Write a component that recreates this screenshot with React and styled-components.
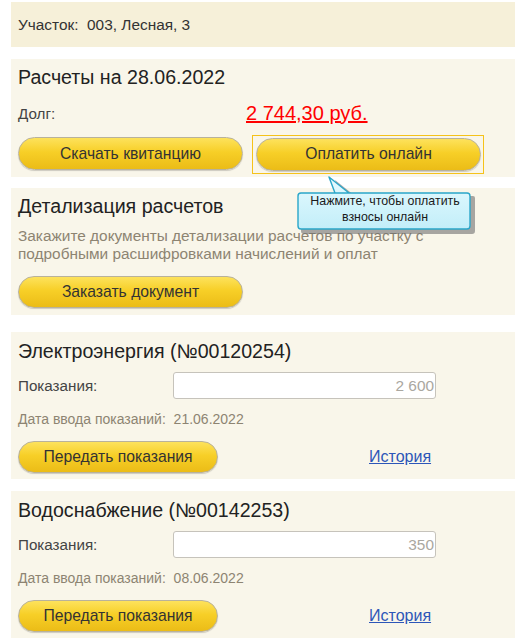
import React from "react";
import styled, { createGlobalStyle } from "styled-components";

const GlobalStyle = createGlobalStyle`
  html, body {
    margin: 0;
    padding: 0;
    background: #ffffff;
  }
  body {
    font-family: "Liberation Sans", Arial, sans-serif;
    color: #333;
  }
`;

const Page = styled.div`
  display: flex;
  flex-direction: column;
  padding: 2px 0 0 11px;
  width: 504px;
`;

const Panel = styled.section`
  position: relative;
  background: ${(p) => (p.$tone === "dark" ? "#f6f0d9" : "#f9f6ea")};
  padding: ${(p) => p.$pad || "6px 0 7px 7px"};
  margin-top: ${(p) => p.$gap || 0}px;
  display: flex;
  flex-direction: column;
`;

const Address = styled.div`
  font-size: 15.4px;
  line-height: 45px;
  height: 45px;
  padding-left: 7px;
  color: #333;
`;

const Title = styled.h2`
  margin: 0;
  font-weight: normal;
  font-size: 19.6px;
  line-height: 24px;
  color: #222;
`;

const Row = styled.div`
  display: grid;
  grid-template-columns: ${(p) => p.$cols};
  align-items: center;
  margin-top: ${(p) => p.$top}px;
`;

const Label = styled.span`
  font-size: 15.2px;
  color: #444;
`;

const Debt = styled.a`
  font-size: 20px;
  line-height: 24px;
  color: #ff0000;
  text-decoration: underline;
  justify-self: start;
`;

const Description = styled.p`
  margin: 9px 0 0;
  font-size: 15.4px;
  line-height: 18px;
  color: #8d8472;
  width: 430px;
`;

const Note = styled.div`
  margin-top: ${(p) => p.$top}px;
  font-size: 14px;
  line-height: 16px;
  color: #8d8472;
`;

const Button = styled.button`
  width: ${(p) => p.$w}px;
  height: ${(p) => p.$h || 32}px;
  border-radius: 17px;
  border: 1px solid #b9b29b;
  background: linear-gradient(to bottom, #fde25c 0%, #f7cf27 45%, #ebbc17 100%);
  box-shadow: 0 1px 1px rgba(0, 0, 0, 0.18);
  font-family: "Liberation Sans", Arial, sans-serif;
  font-size: 15.7px;
  color: #333;
  padding: 0;
  cursor: pointer;
`;

const Actions = styled.div`
  display: flex;
  align-items: center;
  gap: 14px;
  margin-top: ${(p) => p.$top}px;
`;

const Highlight = styled.div`
  position: relative;
  padding: 2px 2px 2px 3px;
  margin: -3px 0 -4px -5px;
  border: 1px solid #f5c21a;
`;

const Callout = styled.div`
  position: absolute;
  left: 42px;
  top: 40px;
  width: 180px;
  height: 60px;
  z-index: 2;
`;

const CalloutShape = styled.svg`
  position: absolute;
  inset: 0;
  overflow: visible;
`;

const CalloutText = styled.div`
  position: absolute;
  left: 4px;
  top: 17px;
  width: 172px;
  text-align: center;
  font-size: 12.4px;
  line-height: 16px;
  color: #1a1a1a;
`;

const Input = styled.div`
  height: 25px;
  width: 260px;
  box-sizing: content-box;
  border: 1px solid #c6c3bb;
  border-radius: 3px;
  background: #fff;
  font-size: 15.4px;
  line-height: 25px;
  text-align: right;
  padding-right: 1px;
  color: #aaa7a0;
`;

const HistoryLink = styled.a`
  font-size: 16px;
  color: #2d56b8;
  text-decoration: underline;
  margin-left: 137px;
`;

const Meter = ({ title, value, date, gap }) => (
  <Panel $gap={gap} $pad="7px 0 6px 7px">
    <Title>{title}</Title>
    <Row $cols="155px 1fr" $top={9}>
      <Label>Показания:</Label>
      <Input>{value}</Input>
    </Row>
    <Note $top={12}>Дата ввода показаний:&nbsp; {date}</Note>
    <Actions $top={14}>
      <Button $w={200}>Передать показания</Button>
      <HistoryLink href="#">История</HistoryLink>
    </Actions>
  </Panel>
);

export default function App() {
  return (
    <>
      <GlobalStyle />
      <Page>
        <Panel $tone="dark" $pad="0">
          <Address>Участок:&nbsp; 003, Лесная, 3</Address>
        </Panel>

        <Panel $gap={12} $pad="6px 0 7px 7px">
          <Title>Расчеты на 28.06.2022</Title>
          <Row $cols="228px 1fr" $top={12}>
            <Label>Долг:</Label>
            <Debt href="#">2 744,30 руб.</Debt>
          </Row>
          <Actions $top={12}>
            <Button $w={225} $h={33}>Скачать квитанцию</Button>
            <Highlight>
              <Button $w={225} $h={33}>Оплатить онлайн</Button>
              <Callout>
                <CalloutShape width="180" height="60" viewBox="0 0 180 60">
                  <defs>
                    <linearGradient id="tipFill" x1="0" y1="0" x2="0" y2="1">
                      <stop offset="0" stopColor="#e6fbff" />
                      <stop offset="1" stopColor="#c2eef9" />
                    </linearGradient>
                  </defs>
                  <path
                    d="M9 17 H175 Q177 17 177 19 V52 Q177 55 174 55 H6 Q3 55 3 52 V20 Q3 17 6 17 H43 L37 1 L57 17 Z"
                    fill="#6f6f6f"
                    opacity="0.6"
                    transform="translate(3 3)"
                  />
                  <path
                    d="M6 17 H172 Q175 17 175 20 V50 Q175 53 172 53 H6 Q3 53 3 50 V20 Q3 17 6 17 H40 L34 1 L54 17 Z"
                    fill="url(#tipFill)"
                    stroke="#2aa6c9"
                    strokeWidth="1.4"
                    strokeLinejoin="round"
                  />
                </CalloutShape>
                <CalloutText>
                  Нажмите, чтобы оплатить
                  <br />
                  взносы онлайн
                </CalloutText>
              </Callout>
            </Highlight>
          </Actions>
        </Panel>

        <Panel $gap={11} $pad="6px 0 7px 7px">
          <Title>Детализация расчетов</Title>
          <Description>
            Закажите документы детализации расчетов по участку с подробными
            расшифровками начислений и оплат
          </Description>
          <Actions $top={13}>
            <Button $w={225}>Заказать документ</Button>
          </Actions>
        </Panel>

        <Meter
          gap={17}
          title="Электроэнергия (№00120254)"
          value="2 600"
          date="21.06.2022"
        />
        <Meter
          gap={12}
          title="Водоснабжение (№00142253)"
          value="350"
          date="08.06.2022"
        />
      </Page>
    </>
  );
}
